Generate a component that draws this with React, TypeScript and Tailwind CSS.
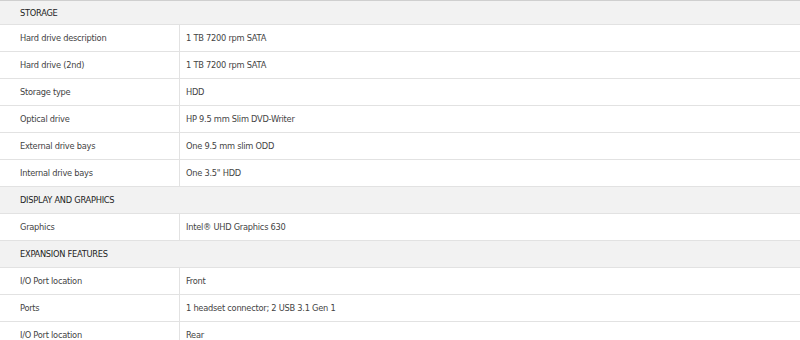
type Row = { label: string; value: string }
type Section = { title: string; rows: Row[] }

const sections: Section[] = [
  {
    title: 'STORAGE',
    rows: [
      { label: 'Hard drive description', value: '1 TB 7200 rpm SATA' },
      { label: 'Hard drive (2nd)', value: '1 TB 7200 rpm SATA' },
      { label: 'Storage type', value: 'HDD' },
      { label: 'Optical drive', value: 'HP 9.5 mm Slim DVD-Writer' },
      { label: 'External drive bays', value: 'One 9.5 mm slim ODD' },
      { label: 'Internal drive bays', value: 'One 3.5" HDD' },
    ],
  },
  {
    title: 'DISPLAY AND GRAPHICS',
    rows: [{ label: 'Graphics', value: 'Intel® UHD Graphics 630' }],
  },
  {
    title: 'EXPANSION FEATURES',
    rows: [
      { label: 'I/O Port location', value: 'Front' },
      { label: 'Ports', value: '1 headset connector; 2 USB 3.1 Gen 1' },
      { label: 'I/O Port location', value: 'Rear' },
    ],
  },
]

export default function App() {
  return (
    <div
      className="w-[800px] h-[340px] overflow-hidden bg-white text-[9.2px] tracking-[-0.25px] text-[#444] border-t border-[#cfcfcf]"
      style={{ fontFamily: '"DejaVu Sans Condensed", "Liberation Sans", sans-serif' }}
    >
      {sections.map((s, i) => (
        <div key={s.title}>
          <div
            className={`flex items-center bg-[#f2f2f2] pl-5 text-[#222] border-b border-[#e2e2e2] ${
              i === 0 ? 'h-6' : 'h-[27px]'
            }`}
          >
            {s.title}
          </div>
          {s.rows.map((r, j) => (
            <div key={j} className="flex h-[27px] border-b border-[#e2e2e2]">
              <div className="w-[180px] shrink-0 flex items-center pl-5 border-r border-[#e2e2e2]">
                {r.label}
              </div>
              <div className="flex-1 flex items-center pl-[6px]">{r.value}</div>
            </div>
          ))}
        </div>
      ))}
    </div>
  )
}
